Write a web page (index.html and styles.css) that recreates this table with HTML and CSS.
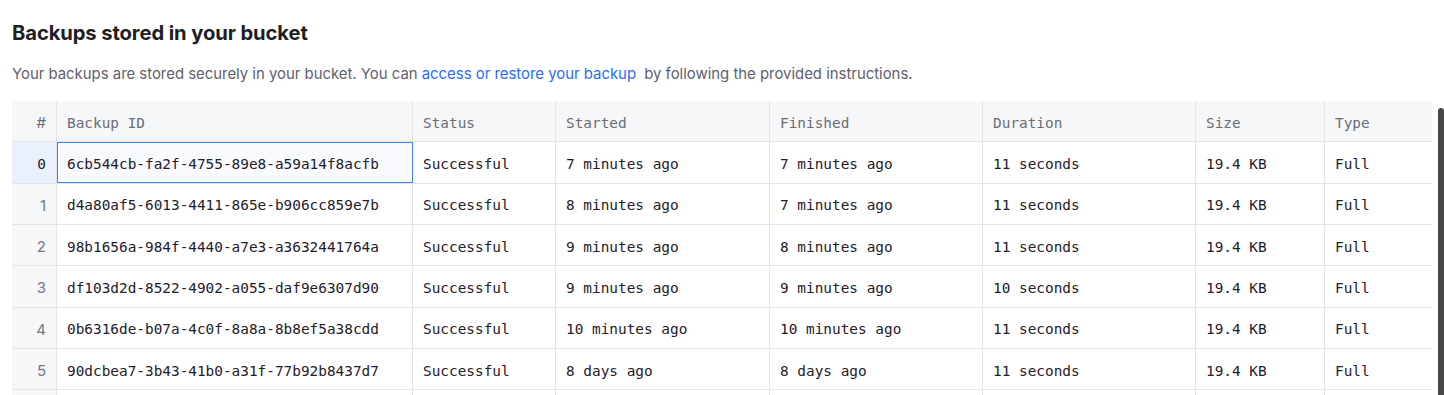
FILE: index.html
```html
<!DOCTYPE html>
<html lang="en">
<head>
<meta charset="utf-8">
<title>Backups</title>
<link rel="stylesheet" href="styles.css">
</head>
<body>
<main class="page">
  <h2 class="title">Backups stored in your bucket</h2>
  <p class="desc">Your backups are stored securely in your bucket. You can <a class="link" href="#">access or restore your backup</a> by following the provided instructions.</p>
  <div class="grid">
    <div class="row head">
      <div class="cell idx">#</div>
      <div class="cell">Backup ID</div>
      <div class="cell">Status</div>
      <div class="cell">Started</div>
      <div class="cell">Finished</div>
      <div class="cell">Duration</div>
      <div class="cell">Size</div>
      <div class="cell">Type</div>
    </div>
    <div class="row selected">
      <div class="cell idx">0</div>
      <div class="cell focus">6cb544cb-fa2f-4755-89e8-a59a14f8acfb</div>
      <div class="cell">Successful</div>
      <div class="cell">7 minutes ago</div>
      <div class="cell">7 minutes ago</div>
      <div class="cell">11 seconds</div>
      <div class="cell">19.4 KB</div>
      <div class="cell">Full</div>
    </div>
    <div class="row">
      <div class="cell idx">1</div>
      <div class="cell">d4a80af5-6013-4411-865e-b906cc859e7b</div>
      <div class="cell">Successful</div>
      <div class="cell">8 minutes ago</div>
      <div class="cell">7 minutes ago</div>
      <div class="cell">11 seconds</div>
      <div class="cell">19.4 KB</div>
      <div class="cell">Full</div>
    </div>
    <div class="row">
      <div class="cell idx">2</div>
      <div class="cell">98b1656a-984f-4440-a7e3-a3632441764a</div>
      <div class="cell">Successful</div>
      <div class="cell">9 minutes ago</div>
      <div class="cell">8 minutes ago</div>
      <div class="cell">11 seconds</div>
      <div class="cell">19.4 KB</div>
      <div class="cell">Full</div>
    </div>
    <div class="row">
      <div class="cell idx">3</div>
      <div class="cell">df103d2d-8522-4902-a055-daf9e6307d90</div>
      <div class="cell">Successful</div>
      <div class="cell">9 minutes ago</div>
      <div class="cell">9 minutes ago</div>
      <div class="cell">10 seconds</div>
      <div class="cell">19.4 KB</div>
      <div class="cell">Full</div>
    </div>
    <div class="row">
      <div class="cell idx">4</div>
      <div class="cell">0b6316de-b07a-4c0f-8a8a-8b8ef5a38cdd</div>
      <div class="cell">Successful</div>
      <div class="cell">10 minutes ago</div>
      <div class="cell">10 minutes ago</div>
      <div class="cell">11 seconds</div>
      <div class="cell">19.4 KB</div>
      <div class="cell">Full</div>
    </div>
    <div class="row">
      <div class="cell idx">5</div>
      <div class="cell">90dcbea7-3b43-41b0-a31f-77b92b8437d7</div>
      <div class="cell">Successful</div>
      <div class="cell">8 days ago</div>
      <div class="cell">8 days ago</div>
      <div class="cell">11 seconds</div>
      <div class="cell">19.4 KB</div>
      <div class="cell">Full</div>
    </div>
    <div class="row">
      <div class="cell idx"></div>
      <div class="cell"></div>
      <div class="cell"></div>
      <div class="cell"></div>
      <div class="cell"></div>
      <div class="cell"></div>
      <div class="cell"></div>
      <div class="cell"></div>
    </div>
    <div class="scrollbar"></div>
  </div>
</main>
</body>
</html>
```

FILE: styles.css
```css
html, body {
  margin: 0;
  padding: 0;
  background: #ffffff;
  overflow: hidden;
  height: 395px;
}

.page {
  padding: 0 12px;
  font-family: Inter, "Noto Sans", sans-serif;
  color: #31333f;
}

.title {
  margin: 0;
  padding-top: 20px;
  font-size: 20.2px;
  line-height: 26px;
  font-weight: 700;
  color: #1d1e24;
  letter-spacing: -0.1px;
}

.desc {
  margin: 0;
  padding-top: 17px;
  font-size: 14.9px;
  line-height: 22px;
  color: #5f616e;
}

.link {
  color: #2a6df4;
  text-decoration: none;
  margin-right: 4px;
}

.grid {
  position: relative;
  margin-top: 16px;
  width: 1420px;
  font-family: "DejaVu Sans Mono", "Liberation Mono", monospace;
  font-size: 14.4px;
}

.row {
  display: grid;
  grid-template-columns: 45px 356px 143px 214px 213px 213px 129px 107px;
  height: 41.33px;
  border-bottom: 1px solid #e4e5e9;
  box-sizing: border-box;
}

.cell {
  display: flex;
  align-items: center;
  padding: 3px 9px 0 10px;
  border-right: 1px solid #e4e5e9;
  white-space: nowrap;
  overflow: hidden;
  color: #1f2029;
}

.cell:last-child {
  border-right: none;
}

.head {
  background: #f6f7f9;
}

.head .cell {
  color: #6b6d76;
}

.idx {
  justify-content: flex-end;
  padding: 3px 10px 0 0;
  background: #f6f7f9;
  font-family: Inter, "Noto Sans", sans-serif;
  font-size: 15px;
  color: #757782;
}

.head .idx {
  font-family: Inter, "Noto Sans", sans-serif;
  color: #6b6d76;
}

.selected .idx {
  background: #eaf1fc;
  font-family: "DejaVu Sans Mono", "Liberation Mono", monospace;
  font-size: 14.4px;
  color: #1f2029;
}

.focus {
  background: #f8faff;
  outline: 1px solid #3f83f4;
  outline-offset: -1px;
}

.scrollbar {
  position: absolute;
  top: 7px;
  left: 1426px;
  width: 6px;
  height: 300px;
  background: #474747;
  border-radius: 3px 3px 0 0;
}
```
